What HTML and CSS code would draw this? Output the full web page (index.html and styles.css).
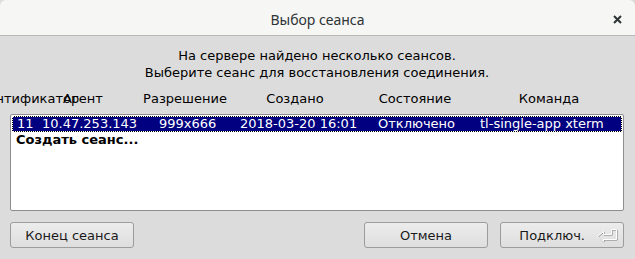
FILE: index.html
```html
<!DOCTYPE html>
<html>
    <head>
        <meta charset="UTF-8">
        <title>Выбор сеанса</title>
        <link rel="stylesheet" href="styles.css">
    </head>
    <body>
        <div class="titlebar">
            <span class="spacer"></span>
            <span class="title">Выбор сеанса</span>
            <span class="close">
                <svg width="9" height="9" viewBox="0 0 9 9"><path d="M1 1L8 8M8 1L1 8" stroke="#2e3436" stroke-width="2"/></svg>
            </span>
        </div>
        <div class="content">
            <div class="message">
                <p>На сервере найдено несколько сеансов.</p>
                <p>Выберите сеанс для восстановления соединения.</p>
            </div>
            <div class="head">
                <span class="hc c1">Идентификатор</span>
                <span class="hc c2">Агент</span>
                <span class="hc c3">Разрешение</span>
                <span class="hc c4">Создано</span>
                <span class="hc c5">Состояние</span>
                <span class="hc c6">Команда</span>
            </div>
            <div class="list">
                <div class="row selected">
                    <span class="r1">11</span>
                    <span class="r2">10.47.253.143</span>
                    <span class="r3">999x666</span>
                    <span class="r4">2018-03-20 16:01</span>
                    <span class="r5">Отключено</span>
                    <span class="r6">tl-single-app xterm</span>
                </div>
                <div class="row create">Создать сеанс...</div>
            </div>
            <div class="buttons">
                <button class="btn">Конец сеанса</button>
                <span class="fill"></span>
                <button class="btn">Отмена</button>
                <button class="btn ok">Подключ.
                    <svg class="enter" width="23" height="15" viewBox="0 0 23 15">
                        <path d="M2.5 8.5L8.5 3.5V6.5H16.5V1.5H21.5V11.5H8.5V13.5Z" fill="none" stroke="#8a8a8a" transform="translate(0.6 0.6)"/>
                        <path d="M2.5 8.5L8.5 3.5V6.5H16.5V1.5H21.5V11.5H8.5V13.5Z" fill="none" stroke="#ffffff"/>
                    </svg>
                </button>
            </div>
        </div>
    </body>
</html>
```

FILE: styles.css
```css
*{
    margin: 0;
    padding: 0;
    box-sizing: border-box;
}
html,body{
    width: 100%;
    height: 100%;
}
body{
    background: #dcdcdc;
    font-family: "DejaVu Sans", sans-serif;
    font-size: 13px;
    color: #000;
    overflow: hidden;
}
.titlebar{
    height: 36px;
    background: #f6f6f5;
    border-bottom: 1px solid #b9b9b7;
    border-radius: 6px 6px 0 0;
    display: grid;
    grid-template-columns: 1fr auto 1fr;
    align-items: center;
}
.title{
    font-family: "Noto Sans", sans-serif;
    font-size: 14px;
    color: #2e3436;
    padding-top: 3px;
}
.close{
    justify-self: end;
    margin-right: 13px;
    display: flex;
    padding-top: 3px;
}
.content{
    padding: 0 11px 0 10px;
}
.message{
    margin-top: 11px;
    text-align: center;
    line-height: 17px;
}
.head{
    display: flex;
    margin-top: 10px;
    height: 16px;
    line-height: 16px;
    white-space: nowrap;
}
.hc{
    display: flex;
    justify-content: center;
}
.c1{ width: 28px; }
.c2{ width: 90px; }
.c3{ width: 114px; }
.c4{ width: 106px; }
.c5{ width: 134px; }
.c6{ width: 134px; }
.list{
    margin-top: 7px;
    height: 97px;
    background: #fff;
    border: 1px solid #8e8e8e;
    border-radius: 2px;
    padding: 1px;
}
.row{
    height: 16px;
    line-height: 14px;
    padding-left: 4px;
    display: flex;
    white-space: nowrap;
}
.selected{
    color: #fff;
    border: 1px dotted #fff;
    background: linear-gradient(#000080, #000080) padding-box, linear-gradient(#000, #000) border-box;
}
.r1{ width: 25px; }
.r2{ width: 117px; }
.r3{ width: 81px; }
.r4{ width: 138px; }
.r5{ width: 102px; }
.create{
    font-weight: bold;
    padding-left: 4px;
    padding-top: 1px;
}
.buttons{
    display: flex;
    gap: 12px;
    margin-top: 11px;
}
.fill{
    flex: 1;
}
.btn{
    width: 124px;
    height: 26px;
    font-family: "DejaVu Sans", sans-serif;
    font-size: 13px;
    color: #1a1a1a;
    background: linear-gradient(#ececec, #dedede);
    border: 1px solid #9c9c9c;
    border-radius: 3px;
}
.ok{
    display: flex;
    align-items: center;
    justify-content: flex-end;
    gap: 10px;
    padding-right: 5px;
}
.enter{
    display: block;
}
```
